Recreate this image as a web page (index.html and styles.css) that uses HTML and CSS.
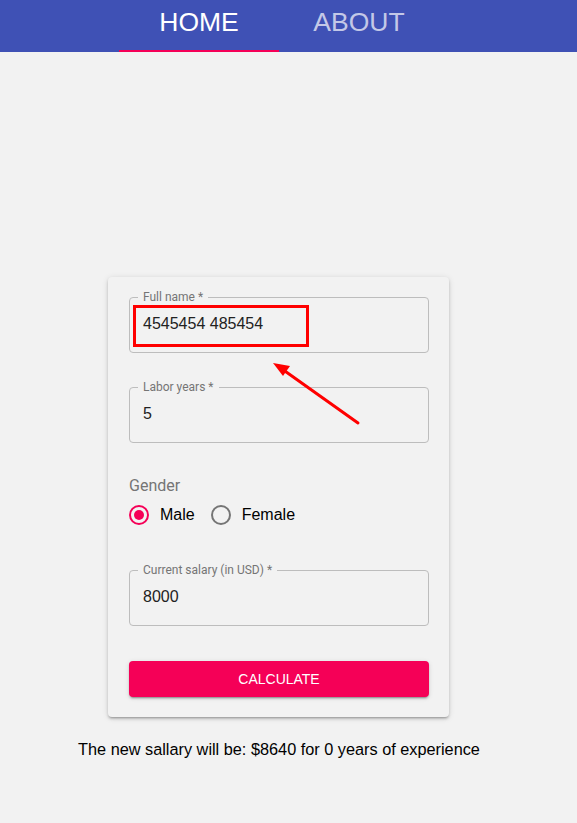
FILE: index.html
```html
<!DOCTYPE html>
<html lang="en">
<head>
<meta charset="utf-8">
<title>Salary calculator</title>
<link rel="stylesheet" href="styles.css">
</head>
<body>
<header class="appbar">
  <nav class="tabs">
    <div class="tab tab-active">HOME</div>
    <div class="tab">ABOUT</div>
  </nav>
</header>
<main class="main">
  <form class="card">
    <fieldset class="field">
      <legend class="field-label">Full name *</legend>
      <div class="field-value">4545454 485454</div>
    </fieldset>
    <fieldset class="field">
      <legend class="field-label">Labor years *</legend>
      <div class="field-value">5</div>
    </fieldset>
    <div class="gender">
      <div class="gender-label">Gender</div>
      <div class="radios">
        <span class="radio radio-on"><span class="radio-dot"></span></span>
        <span class="radio-text">Male</span>
        <span class="radio"></span>
        <span class="radio-text">Female</span>
      </div>
    </div>
    <fieldset class="field">
      <legend class="field-label">Current salary (in USD) *</legend>
      <div class="field-value">8000</div>
    </fieldset>
    <button type="button" class="btn">CALCULATE</button>
  </form>
  <p class="result">The new sallary will be: $8640 for 0 years of experience</p>
</main>
<div class="annot-box"></div>
<svg class="annot-arrow" width="577" height="823" viewBox="0 0 577 823">
  <line x1="358" y1="423" x2="282" y2="369" stroke="#ff0000" stroke-width="3" stroke-linecap="round"/>
  <polygon points="273,363 290,366 283,376" fill="#ff0000"/>
</svg>
</body>
</html>
```
FILE: styles.css
```css
html, body {
  margin: 0;
  padding: 0;
}
body {
  background: #f2f2f2;
  font-family: "Liberation Sans", Arial, sans-serif;
  color: #000;
  width: 577px;
  height: 823px;
  overflow: hidden;
  position: relative;
}
.appbar {
  background: #3f51b5;
  height: 52px;
}
.tabs {
  display: flex;
  padding-left: 119px;
  height: 52px;
}
.tab {
  width: 160px;
  height: 52px;
  box-sizing: border-box;
  display: flex;
  align-items: center;
  justify-content: center;
  font-size: 26.5px;
  color: rgba(255,255,255,0.7);
  padding-bottom: 7px;
}
.tab-active {
  color: #fff;
  border-bottom: 2px solid #f50057;
  padding-bottom: 5px;
}
.main {
  width: 442px;
  margin: 225px 0 0 58px;
  display: flex;
  flex-direction: column;
  align-items: center;
}
.card {
  width: 341px;
  box-sizing: border-box;
  padding: 14px 20px 20px 21px;
  background: #f2f2f2;
  border-radius: 4px;
  box-shadow: 0 2px 2px -1px rgba(0,0,0,0.2), 0 2px 3px 0 rgba(0,0,0,0.14), 0 1px 6px 0 rgba(0,0,0,0.12);
  display: flex;
  flex-direction: column;
  margin-left: -1px;
}
.field {
  margin: 0;
  padding: 0 13px;
  border: 1px solid #bdbdbd;
  border-radius: 4px;
  min-width: 0;
}
.field + .field {
  margin-top: 28px;
}
.field-label {
  font-family: Roboto, "Liberation Sans", sans-serif;
  font-size: 12px;
  line-height: 12px;
  color: #757575;
  padding: 0 5px;
  margin-left: -5px;
}
.field-value {
  font-size: 16px;
  line-height: 19px;
  color: #222;
  padding: 11px 0 19px;
}
.gender {
  margin-top: 33px;
  margin-bottom: 39px;
}
.gender-label {
  font-family: Roboto, "Liberation Sans", sans-serif;
  font-size: 16px;
  line-height: 19px;
  color: #757575;
}
.radios {
  display: flex;
  align-items: center;
  margin-top: 10px;
  height: 20px;
}
.radio {
  width: 20px;
  height: 20px;
  box-sizing: border-box;
  border: 2px solid #757575;
  border-radius: 50%;
  display: flex;
  align-items: center;
  justify-content: center;
}
.radio-on {
  border-color: #f50057;
}
.radio-dot {
  width: 10px;
  height: 10px;
  border-radius: 50%;
  background: #f50057;
}
.radio-text {
  font-size: 16px;
  margin-left: 11px;
  margin-right: 16px;
}
.btn {
  margin-top: 35px;
  height: 36px;
  border: none;
  border-radius: 4px;
  background: #f50057;
  color: #fff;
  font-family: "Liberation Sans", Arial, sans-serif;
  font-size: 14px;
  box-shadow: 0 3px 1px -2px rgba(0,0,0,0.2), 0 2px 2px 0 rgba(0,0,0,0.14), 0 1px 5px 0 rgba(0,0,0,0.12);
  padding: 0;
}
.result {
  margin: 23px 0 0;
  font-size: 16.3px;
  line-height: 19px;
  text-align: center;
}
.annot-box {
  position: absolute;
  left: 133px;
  top: 305px;
  width: 176px;
  height: 42px;
  box-sizing: border-box;
  border: 3px solid #ff0000;
}
.annot-arrow {
  position: absolute;
  left: 0;
  top: 0;
  pointer-events: none;
}
```
